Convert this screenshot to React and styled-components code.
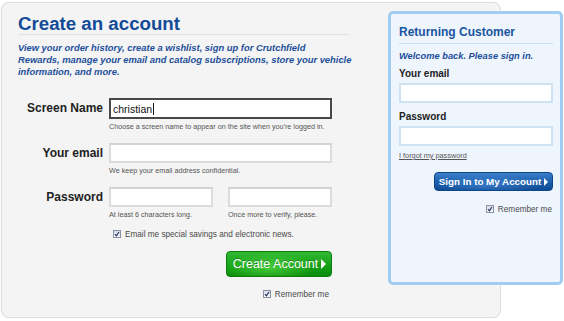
import React from 'react';
import styled, { createGlobalStyle } from 'styled-components';

const GlobalStyle = createGlobalStyle`
  body {
    margin: 0;
    background: #fff;
    font-family: "Liberation Sans", Arial, sans-serif;
  }
`;

const CheckBox = () => (
  <Box>
    <svg width="6" height="6" viewBox="0 0 6 6">
      <path d="M1 3.2 L2.4 4.8 L5 1" fill="none" stroke="#1f2a5a" strokeWidth="1.1" />
    </svg>
  </Box>
);

const App = () => (
  <Page>
    <GlobalStyle />
    <CreatePanel>
      <Title>Create an account</Title>
      <Intro>
        View your order history, create a wishlist, sign up for Crutchfield<br />
        Rewards, manage your email and catalog subscriptions, store your vehicle<br />
        information, and more.
      </Intro>

      <Form>
        <FieldRow>
          <Label height={21}>Screen Name</Label>
          <FieldCol>
            <FocusedBox>christian<Caret /></FocusedBox>
            <Hint>Choose a screen name to appear on the site when you're logged in.</Hint>
          </FieldCol>
        </FieldRow>

        <FieldRow top={12}>
          <Label height={20}>Your email</Label>
          <FieldCol>
            <TextInput type="text" />
            <Hint>We keep your email address confidential.</Hint>
          </FieldCol>
        </FieldRow>

        <FieldRow top={12}>
          <Label height={20}>Password</Label>
          <PasswordPair>
            <FieldCol>
              <TextInput type="password" />
              <Hint>At least 6 characters long.</Hint>
            </FieldCol>
            <FieldCol>
              <TextInput type="password" />
              <Hint>Once more to verify, please.</Hint>
            </FieldCol>
          </PasswordPair>
        </FieldRow>

        <OptionRow top={10} indent={95}>
          <CheckBox />
          <OptionText>Email me special savings and electronic news.</OptionText>
        </OptionRow>

        <ActionRow>
          <CreateButton type="button">
            Create Account <Arrow size={5} />
          </CreateButton>
        </ActionRow>

        <OptionRow top={12} right end={155}>
          <CheckBox />
          <OptionText>Remember me</OptionText>
        </OptionRow>
      </Form>
    </CreatePanel>

    <SignInPanel>
      <SideTitle>Returning Customer</SideTitle>
      <Welcome>Welcome back. Please sign in.</Welcome>
      <SideLabel>Your email</SideLabel>
      <SideInput type="text" />
      <SideLabel top={8}>Password</SideLabel>
      <SideInput type="password" />
      <Forgot href="#">I forgot my password</Forgot>
      <SideActions>
        <SignInButton type="button">
          Sign In to My Account <Arrow size={4} />
        </SignInButton>
      </SideActions>
      <OptionRow top={13} right end={1}>
        <CheckBox />
        <OptionText>Remember me</OptionText>
      </OptionRow>
    </SignInPanel>
  </Page>
);

const Page = styled.div`
  display: flex;
  align-items: flex-start;
  width: 564px;
  height: 321px;
  padding: 2px 0 0 1px;
  box-sizing: border-box;
  overflow: hidden;
`;

const CreatePanel = styled.section`
  flex: none;
  width: 500px;
  height: 316px;
  box-sizing: border-box;
  padding: 11px 16px 0;
  background: #f4f4f4;
  border: 1px solid #dedede;
  border-radius: 8px;
  box-shadow: 0 0 2px rgba(0, 0, 0, 0.06);
`;

const Title = styled.h1`
  margin: 0;
  width: 331px;
  font-size: 18.7px;
  line-height: 20px;
  font-weight: bold;
  color: #124b98;
  border-bottom: 1px solid #e2e2e2;
`;

const Intro = styled.p`
  margin: 7px 0 0;
  font-size: 9.4px;
  line-height: 12px;
  font-weight: bold;
  font-style: italic;
  color: #1d4f9a;
  white-space: nowrap;
`;

const Form = styled.div`
  margin-top: 20px;
  display: flex;
  flex-direction: column;
`;

const FieldRow = styled.div`
  display: flex;
  align-items: flex-start;
  gap: 6px;
  margin-top: ${p => p.top || 0}px;
`;

const Label = styled.label`
  flex: none;
  width: 85px;
  height: ${p => p.height}px;
  line-height: ${p => p.height}px;
  text-align: right;
  font-size: 12px;
  font-weight: bold;
  color: #222;
`;

const FieldCol = styled.div`
  display: flex;
  flex-direction: column;
`;

const PasswordPair = styled.div`
  display: flex;
  gap: 15px;
  & input {
    width: 104px;
  }
`;

const TextInput = styled.input`
  width: 223px;
  height: 20px;
  box-sizing: border-box;
  margin: 0;
  padding: 0 3px;
  background: #fff;
  border: 2px solid #dcdcdc;
  border-top-color: #d2d2d2;
  outline: none;
  font-family: inherit;
  font-size: 10.5px;
`;

const FocusedBox = styled.div`
  width: 223px;
  height: 21px;
  box-sizing: border-box;
  padding: 0 2px;
  display: flex;
  align-items: center;
  background: #fff;
  border: 2px solid #484848;
  font-size: 10.5px;
  color: #111;
`;

const Caret = styled.span`
  display: inline-block;
  width: 1px;
  height: 12px;
  margin-left: 1px;
  background: #111;
`;

const Hint = styled.div`
  margin-top: 3px;
  font-size: 7.2px;
  line-height: 9px;
  color: #555;
  white-space: nowrap;
`;

const OptionRow = styled.div`
  display: flex;
  align-items: center;
  justify-content: ${p => (p.right ? 'flex-end' : 'flex-start')};
  gap: 4px;
  height: 10px;
  margin-top: ${p => p.top || 0}px;
  padding-left: ${p => p.indent || 0}px;
  padding-right: ${p => p.end || 0}px;
`;

const Box = styled.span`
  flex: none;
  width: 8px;
  height: 8px;
  box-sizing: border-box;
  display: flex;
  align-items: center;
  justify-content: center;
  border: 1px solid #8a90a6;
  background: linear-gradient(#d9dde6, #f6f7fa);
`;

const OptionText = styled.span`
  font-size: 8.2px;
  color: #4a4a4a;
  white-space: nowrap;
`;

const ActionRow = styled.div`
  display: flex;
  justify-content: flex-end;
  margin-top: 12px;
  padding-right: 152px;
`;

const Arrow = styled.span`
  display: inline-block;
  width: 0;
  height: 0;
  margin-left: 3px;
  border-left: ${p => p.size}px solid #fff;
  border-top: ${p => p.size}px solid transparent;
  border-bottom: ${p => p.size}px solid transparent;
`;

const CreateButton = styled.button`
  width: 106px;
  height: 26px;
  box-sizing: border-box;
  padding: 0 0 0 1px;
  display: flex;
  align-items: center;
  justify-content: center;
  border: 1px solid #0c7c0c;
  border-radius: 4px;
  background:
    radial-gradient(ellipse 45% 60% at 40% 65%, rgba(110, 240, 90, 0.55), rgba(110, 240, 90, 0) 100%),
    linear-gradient(#33b833, #16a116 55%, #0a8c0a);
  color: #fff;
  font-family: inherit;
  font-size: 12.5px;
  text-shadow: 0 -1px 0 rgba(0, 80, 0, 0.4);
`;

const SignInPanel = styled.aside`
  flex: none;
  width: 175px;
  height: 274px;
  margin: 9px 0 0 -113px;
  box-sizing: border-box;
  padding: 11px 7px 0 8px;
  display: flex;
  flex-direction: column;
  background: #eef5fd;
  border: 3px solid #a2cdf2;
  border-radius: 5px;
`;

const SideTitle = styled.h2`
  margin: 0;
  padding-bottom: 4px;
  font-size: 12px;
  line-height: 14px;
  font-weight: bold;
  color: #1a549f;
  border-bottom: 1px solid #cadff1;
`;

const Welcome = styled.p`
  margin: 6px 0 0;
  font-size: 9.3px;
  line-height: 12px;
  font-weight: bold;
  font-style: italic;
  color: #1d4f9a;
`;

const SideLabel = styled.label`
  margin-top: ${p => p.top || 6}px;
  font-size: 10px;
  line-height: 12px;
  font-weight: bold;
  color: #222;
`;

const SideInput = styled.input`
  margin: 3px 0 0;
  width: 100%;
  height: 20px;
  box-sizing: border-box;
  padding: 0 3px;
  background: #fff;
  border: 2px solid #cfe2f3;
  outline: none;
  font-family: inherit;
  font-size: 10px;
`;

const Forgot = styled.a`
  margin-top: 5px;
  font-size: 7.3px;
  line-height: 9px;
  color: #555;
  text-decoration: underline;
`;

const SideActions = styled.div`
  display: flex;
  justify-content: flex-end;
  margin-top: 12px;
`;

const SignInButton = styled.button`
  width: 119px;
  height: 19px;
  box-sizing: border-box;
  padding: 0;
  display: flex;
  align-items: center;
  justify-content: center;
  border: 1px solid #0c4588;
  border-radius: 4px;
  background:
    radial-gradient(ellipse 45% 60% at 45% 70%, rgba(90, 160, 240, 0.45), rgba(90, 160, 240, 0) 100%),
    linear-gradient(#3b7fcc, #1d5eaa 55%, #0f4b93);
  color: #fff;
  font-family: inherit;
  font-size: 9.8px;
  font-weight: bold;
`;

export default App;
